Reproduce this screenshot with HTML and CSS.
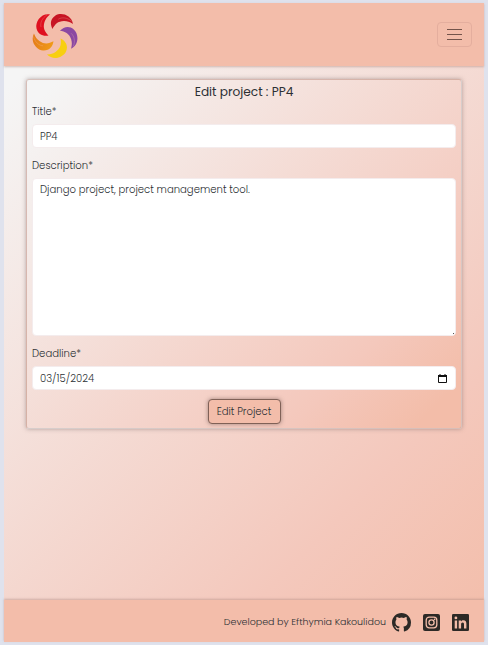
FILE: index.html
```html
<!DOCTYPE html>
<html lang="en">
<head>
<meta charset="utf-8">
<title>Edit project</title>
<link rel="stylesheet" href="styles.css">
</head>
<body>
<div class="app">
  <header class="header">
    <svg class="logo" viewBox="-23 -23 46 46" aria-label="Logo">
      <defs>
        <linearGradient id="gold" x1="0" y1="0" x2="0" y2="1"><stop offset="0" stop-color="#e47b19"/><stop offset="1" stop-color="#f09a17"/></linearGradient>
        <path id="petal" d="M-5 -20.5C-14 -22 -20 -13 -18.5 -6.5C-17 -.5 -12 1.5 -6.5 .5C-10 -3 -12.5 -7 -10.5 -13C-9.5 -16 -8 -18 -5 -20.5Z"/>
        <path id="vein" d="M-8 -20C-13 -17 -15 -12 -14 -8"/>
      </defs>
      <use href="#petal" fill="#df101f"/>
      <use href="#petal" fill="#c71524" transform="rotate(72)"/>
      <use href="#petal" fill="#8b48a2" transform="rotate(144)"/>
      <use href="#petal" fill="#f8cf10" transform="rotate(216)"/>
      <use href="#petal" fill="url(#gold)" transform="rotate(288)"/>
      <g fill="none" stroke="#f3bdaa" stroke-width=".5" stroke-opacity=".5">
        <use href="#vein"/>
        <use href="#vein" transform="rotate(72)"/>
        <use href="#vein" transform="rotate(144)"/>
        <use href="#vein" transform="rotate(288)"/>
      </g>
    </svg>
    <button class="toggler" aria-label="Menu">
      <svg viewBox="0 0 15 11"><path d="M0 .5h15M0 5.5h15M0 10.5h15"/></svg>
    </button>
  </header>
  <main class="main">
    <form class="card">
      <h1 class="heading">Edit project : PP4</h1>
      <label class="label">Title*</label>
      <div class="field">PP4</div>
      <label class="label description">Description*</label>
      <div class="field area">Django project, project management tool.
        <svg class="grip" viewBox="0 0 6 6"><path d="M4 4.5h1"/></svg>
      </div>
      <label class="label deadline">Deadline*</label>
      <div class="field date">03/15/2024
        <svg class="calendar" viewBox="0 0 9 9"><path d="M.5 1.5h8v7h-8z" fill="none" stroke="#111"/><path d="M0 1h9v2H0zM1.5 0h1v1h-1zM6.5 0h1v1h-1z" fill="#111"/></svg>
      </div>
      <button class="submit" type="button">Edit Project</button>
    </form>
  </main>
  <footer class="footer">
    <span class="credit">Developed by Efthymia Kakoulidou</span>
    <svg class="icon github" viewBox="0 0 16 16"><path d="M8 0C3.58 0 0 3.58 0 8c0 3.54 2.29 6.53 5.47 7.59.4.07.55-.17.55-.38 0-.19-.01-.82-.01-1.49-2.01.37-2.53-.49-2.69-.94-.09-.23-.48-.94-.82-1.13-.28-.15-.68-.52-.01-.53.63-.01 1.08.58 1.23.82.72 1.21 1.87.87 2.33.66.07-.52.28-.87.51-1.07-1.78-.2-3.64-.89-3.64-3.95 0-.87.31-1.59.82-2.15-.08-.2-.36-1.02.08-2.12 0 0 .67-.21 2.2.82a7.6 7.6 0 0 1 4 0c1.53-1.04 2.2-.82 2.2-.82.44 1.1.16 1.92.08 2.12.51.56.82 1.27.82 2.15 0 3.07-1.87 3.75-3.65 3.95.29.25.54.73.54 1.48 0 1.07-.01 1.93-.01 2.2 0 .21.15.46.55.38A8.01 8.01 0 0 0 16 8c0-4.42-3.58-8-8-8z"/></svg>
    <svg class="icon" viewBox="0 0 17 17"><rect width="17" height="17" rx="2"/><g fill="none" stroke="#f3bdaa" stroke-width="1.3"><rect x="3.2" y="3.2" width="10.6" height="10.6" rx="3"/><circle cx="8.5" cy="8.5" r="2.6"/></g><circle cx="11.6" cy="5.4" r=".8" fill="#f3bdaa"/></svg>
    <svg class="icon" viewBox="0 0 17 17"><rect width="17" height="17" rx="1.3"/><g fill="#f3bdaa"><circle cx="3.9" cy="3.9" r="1.4"/><path d="M2.7 6.5h2.4v8H2.7zM6.7 6.5H9v1.1c.5-.8 1.3-1.3 2.4-1.3 2.4 0 3 1.6 3 3.7v4.5H12v-4c0-1.2-.2-2.1-1.3-2.1-1.2 0-1.6.9-1.6 2.1v4H6.7z"/></g></svg>
  </footer>
</div>
</body>
</html>
```
FILE: styles.css
```css
* { box-sizing: border-box; }
body {
  margin: 0;
  height: 645px;
  padding: 3px 4px;
  background: #dfe2ed;
  font: 300 10.08px/16px Poppins, Inter, "Liberation Sans", sans-serif;
  color: #2c3034;
  overflow: hidden;
}
.app {
  height: 639px;
  display: flex;
  flex-direction: column;
  background: linear-gradient(135deg, #f5f5f5 8%, #f4c8bc 76%, #f3bda9 100%);
}
.header {
  height: 63px;
  flex: none;
  display: flex;
  align-items: center;
  justify-content: space-between;
  padding: 0 12px 0 28px;
  background: #f3bdaa;
  box-shadow: 0 1px 2px #aa857b80;
}
.logo { width: 46px; height: 46px; }
.toggler {
  width: 35px;
  height: 25px;
  padding: 0;
  display: grid;
  place-items: center;
  border: 1px solid #e4ae9e;
  border-radius: 4px;
  background: none;
}
.toggler svg { width: 15px; height: 11px; stroke: #73534a; shape-rendering: crispEdges; }
.main { flex: 1; padding: 13px 22px; }
.card {
  height: 350px;
  display: flex;
  flex-direction: column;
  padding: 4px 6px;
  border: 1px solid #b9a5a280;
  border-radius: 3px;
  background: linear-gradient(135deg, #f5f5f5 4%, #f4c8bc 78%, #f3bda9 94%);
  box-shadow: 0 0 4px #70606080;
}
.heading { margin: 0; text-align: center; font-size: 12.15px; font-weight: 400; line-height: 16px; }
.label { height: 16px; margin: 4px 0 4px -1px; }
.field {
  flex: none;
  height: 24px;
  margin: 0 -1px;
  padding: 4px 7px;
  line-height: 15px;
  border: 1px solid #f4eced;
  border-radius: 4px;
  background: #fff;
}
.description { margin-top: 10px; }
.area { height: 158px; padding-top: 3px; position: relative; }
.grip { position: absolute; right: 0; bottom: 0; width: 6px; height: 6px; stroke: #555; }
.deadline { margin-top: 10px; }
.date { display: flex; align-items: center; justify-content: space-between; padding-right: 8px; }
.calendar { width: 9px; height: 9px; }
.submit {
  align-self: center;
  width: 73px;
  height: 25px;
  margin-top: 9px;
  padding: 0;
  border: 1px solid #806157;
  border-radius: 4px;
  background: #f3bdaa;
  box-shadow: 0 0 4px #79605ab0;
  font: inherit;
  color: #2c3034;
  flex: none;
}
.footer {
  height: 42px;
  flex: none;
  display: flex;
  align-items: center;
  justify-content: flex-end;
  gap: 12px;
  padding: 2px 15px 0 0;
  background: #f3bdaa;
  box-shadow: 0 -1px 2px #aa857b80;
}
.credit { white-space: nowrap; margin-right: -6px; font-size: 9.5px; }
.icon { width: 17px; height: 17px; fill: #2c2926; }
.github { width: 19px; height: 19px; }
```
